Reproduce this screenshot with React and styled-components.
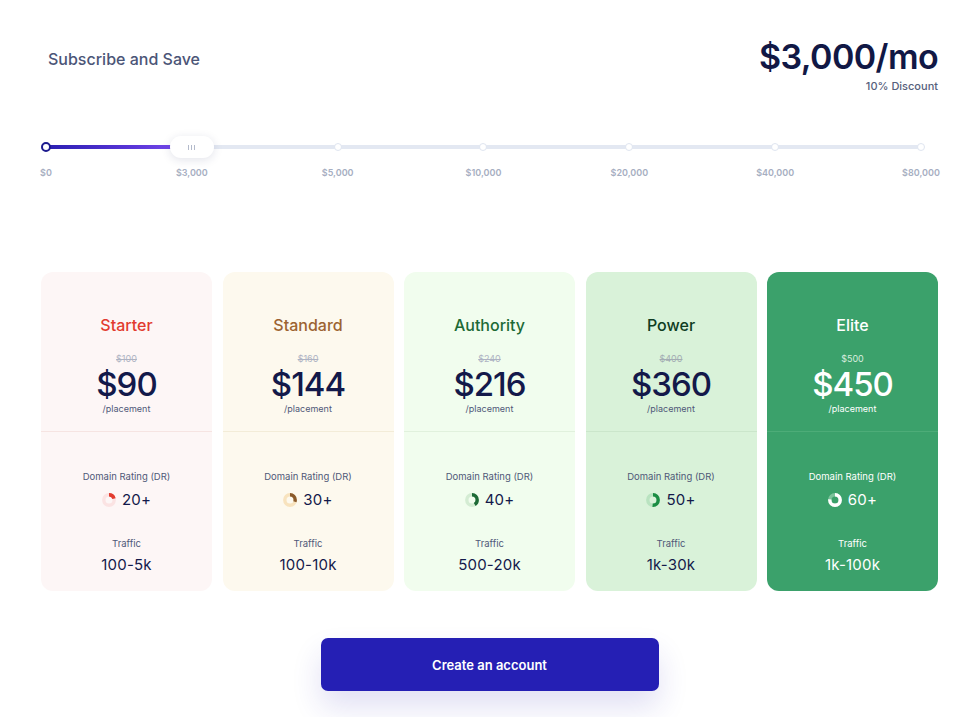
import React from "react";
import styled, { createGlobalStyle } from "styled-components";

const GlobalStyle = createGlobalStyle`
  * { box-sizing: border-box; }
  html, body { margin: 0; padding: 0; background: #ffffff; }
  body {
    font-family: Inter, "Noto Sans", "Liberation Sans", sans-serif;
    color: #13194a;
    -webkit-font-smoothing: antialiased;
  }
`;

const Page = styled.div`
  width: 974px;
  min-height: 717px;
  padding: 37px 36px 0 41px;
`;

const Header = styled.header`
  display: flex;
  justify-content: space-between;
  align-items: flex-start;
`;

const Heading = styled.h2`
  margin: 10px 0 0 7px;
  font-size: 16px;
  line-height: 24px;
  font-weight: 500;
  color: #4b5577;
`;

const Total = styled.div`
  display: flex;
  flex-direction: column;
  align-items: flex-end;
`;

const TotalAmount = styled.div`
  font-size: 34px;
  line-height: 40px;
  font-weight: 600;
  letter-spacing: -0.6px;
  color: #111845;
`;

const TotalNote = styled.div`
  margin-top: 2px;
  font-size: 11px;
  line-height: 14px;
  font-weight: 500;
  color: #56607c;
`;

const Slider = styled.div`
  position: relative;
  margin: 43px 17px 0 5px;
`;

const Stops = styled.div`
  position: relative;
  display: flex;
  justify-content: space-between;

  &::before {
    content: "";
    position: absolute;
    left: 0;
    right: 0;
    top: 9px;
    height: 4px;
    border-radius: 2px;
    background: #e3e8f2;
  }
`;

const Stop = styled.div`
  position: relative;
  width: 0;
  display: flex;
  flex-direction: column;
  align-items: center;
`;

const Dot = styled.span`
  flex: none;
  margin-top: ${(p) => (p.$start ? "6px" : "7px")};
  width: ${(p) => (p.$start ? "10px" : "8px")};
  height: ${(p) => (p.$start ? "10px" : "8px")};
  border-radius: 50%;
  background: #ffffff;
  border: ${(p) => (p.$start ? "2.5px solid #1c1a8e" : "1.5px solid #dfe5f0")};
  position: relative;
  z-index: 2;
`;

const StopLabel = styled.span`
  margin-top: ${(p) => (p.$start ? "15px" : "16px")};
  white-space: nowrap;
  font-size: 9px;
  line-height: 12px;
  font-weight: 600;
  color: #a6aec1;
`;

const Fill = styled.div`
  position: absolute;
  left: 0;
  top: 9px;
  height: 4px;
  border-radius: 2px;
  background: linear-gradient(90deg, #2a1fb2 0%, #5a36d8 60%, #7e4ff0 100%);
  z-index: 1;
`;

const Handle = styled.div`
  position: absolute;
  top: 0;
  width: 44px;
  height: 22px;
  margin-left: -22px;
  border-radius: 11px;
  background: #ffffff;
  box-shadow: 0 2px 10px rgba(30, 40, 90, 0.13);
  display: flex;
  align-items: center;
  justify-content: center;
  gap: 2px;
  z-index: 3;
`;

const Grip = styled.span`
  width: 1px;
  height: 5px;
  background: #b3bacb;
`;

const Plans = styled.div`
  margin-top: 93px;
  display: grid;
  grid-template-columns: repeat(5, 1fr);
  gap: 10.5px;
`;

const Card = styled.div`
  height: 319px;
  border-radius: 12px;
  background: ${(p) => p.$bg};
  display: flex;
  flex-direction: column;
  text-align: center;
`;

const CardTop = styled.div`
  padding: 43px 0 16px;
  border-bottom: 1px solid ${(p) => p.$line};
  display: flex;
  flex-direction: column;
  align-items: center;
`;

const PlanName = styled.div`
  font-size: 16px;
  line-height: 20px;
  font-weight: 500;
  color: ${(p) => p.$color};
`;

const OldPrice = styled.div`
  margin-top: 18px;
  font-size: 9px;
  line-height: 12px;
  color: ${(p) => p.$color};
  text-decoration: ${(p) => (p.$strike ? "line-through" : "none")};
`;

const Price = styled.div`
  font-size: 33px;
  line-height: 38px;
  font-weight: 500;
  letter-spacing: -1px;
  color: ${(p) => p.$color};
`;

const Unit = styled.div`
  font-size: 9px;
  line-height: 12px;
  color: ${(p) => p.$color};
`;

const CardBottom = styled.div`
  padding-top: 39px;
  display: flex;
  flex-direction: column;
  align-items: center;
`;

const StatLabel = styled.div`
  margin-top: ${(p) => p.$gap || "0"};
  font-size: 9.5px;
  line-height: 12px;
  color: ${(p) => p.$color};
`;

const StatValue = styled.div`
  margin-top: ${(p) => p.$gap};
  display: flex;
  align-items: center;
  gap: 6px;
  font-size: 15px;
  line-height: 20px;
  font-weight: 400;
  letter-spacing: 0.2px;
  color: ${(p) => p.$color};
`;

const Actions = styled.div`
  margin-top: 47px;
  display: flex;
  justify-content: center;
`;

const CreateButton = styled.button`
  width: 338px;
  height: 53px;
  border: none;
  border-radius: 7px;
  background: #251fb4;
  color: #ffffff;
  font-family: inherit;
  font-size: 13px;
  font-weight: 600;
  cursor: pointer;
  box-shadow: 0 16px 30px rgba(40, 32, 180, 0.14);
`;

function Donut({ value, track, color }) {
  const r = 5.2;
  const c = 2 * Math.PI * r;
  return (
    <svg width="14" height="14" viewBox="0 0 14 14">
      <circle cx="7" cy="7" r={r} fill="none" stroke={track} strokeWidth="3.4" />
      <circle
        cx="7"
        cy="7"
        r={r}
        fill="none"
        stroke={color}
        strokeWidth="3.4"
        strokeDasharray={`${c * value} ${c}`}
        transform="rotate(-90 7 7)"
      />
    </svg>
  );
}

const stops = ["$0", "$3,000", "$5,000", "$10,000", "$20,000", "$40,000", "$80,000"];
const position = 1 / 6;

const plans = [
  {
    name: "Starter", old: "$100", price: "$90", dr: "20+", ring: 0.2, traffic: "100-5k",
    bg: "#fdf6f6", line: "#f6e4e2", title: "#e23b2f", ink: "#13194a", soft: "#4f5878",
    faint: "#aeb3c3", ringTrack: "#fbe3e3", ringColor: "#e23b2f", strike: true,
  },
  {
    name: "Standard", old: "$160", price: "$144", dr: "30+", ring: 0.3, traffic: "100-10k",
    bg: "#fdf9ee", line: "#f3ecd8", title: "#9c6331", ink: "#13194a", soft: "#4f5878",
    faint: "#aeb3c3", ringTrack: "#f8e3be", ringColor: "#8a5a2b", strike: true,
  },
  {
    name: "Authority", old: "$240", price: "$216", dr: "40+", ring: 0.4, traffic: "500-20k",
    bg: "#f1fdee", line: "#e1f1dd", title: "#1d6a36", ink: "#13194a", soft: "#4f5878",
    faint: "#aeb3c3", ringTrack: "#d4ecd3", ringColor: "#1d6a36", strike: true,
  },
  {
    name: "Power", old: "$400", price: "$360", dr: "50+", ring: 0.5, traffic: "1k-30k",
    bg: "#d9f2d9", line: "#cbe6cb", title: "#0f3d22", ink: "#13194a", soft: "#4f5878",
    faint: "#a3adb3", ringTrack: "#b9e3c0", ringColor: "#1a8d43", strike: true,
  },
  {
    name: "Elite", old: "$500", price: "$450", dr: "60+", ring: 0.75, traffic: "1k-100k",
    bg: "#3ba16b", line: "#4dac78", title: "#ffffff", ink: "#ffffff", soft: "#ffffff",
    faint: "#d7eddf", ringTrack: "#7cc39b", ringColor: "#ffffff", strike: false,
  },
];

export default function App() {
  return (
    <>
      <GlobalStyle />
      <Page>
        <Header>
          <Heading>Subscribe and Save</Heading>
          <Total>
            <TotalAmount>$3,000/mo</TotalAmount>
            <TotalNote>10% Discount</TotalNote>
          </Total>
        </Header>

        <Slider>
          <Fill style={{ width: `${position * 100}%` }} />
          <Handle style={{ left: `${position * 100}%` }}>
            <Grip />
            <Grip />
            <Grip />
          </Handle>
          <Stops>
            {stops.map((s, i) => (
              <Stop key={s}>
                <Dot $start={i === 0} />
                <StopLabel $start={i === 0}>{s}</StopLabel>
              </Stop>
            ))}
          </Stops>
        </Slider>

        <Plans>
          {plans.map((p) => (
            <Card key={p.name} $bg={p.bg}>
              <CardTop $line={p.line}>
                <PlanName $color={p.title}>{p.name}</PlanName>
                <OldPrice $color={p.faint} $strike={p.strike}>{p.old}</OldPrice>
                <Price $color={p.ink}>{p.price}</Price>
                <Unit $color={p.soft}>/placement</Unit>
              </CardTop>
              <CardBottom>
                <StatLabel $color={p.soft}>Domain Rating (DR)</StatLabel>
                <StatValue $gap="7px" $color={p.ink}>
                  <Donut value={p.ring} track={p.ringTrack} color={p.ringColor} />
                  {p.dr}
                </StatValue>
                <StatLabel $gap="28px" $color={p.soft}>Traffic</StatLabel>
                <StatValue $gap="5px" $color={p.ink}>{p.traffic}</StatValue>
              </CardBottom>
            </Card>
          ))}
        </Plans>

        <Actions>
          <CreateButton>Create an account</CreateButton>
        </Actions>
      </Page>
    </>
  );
}
